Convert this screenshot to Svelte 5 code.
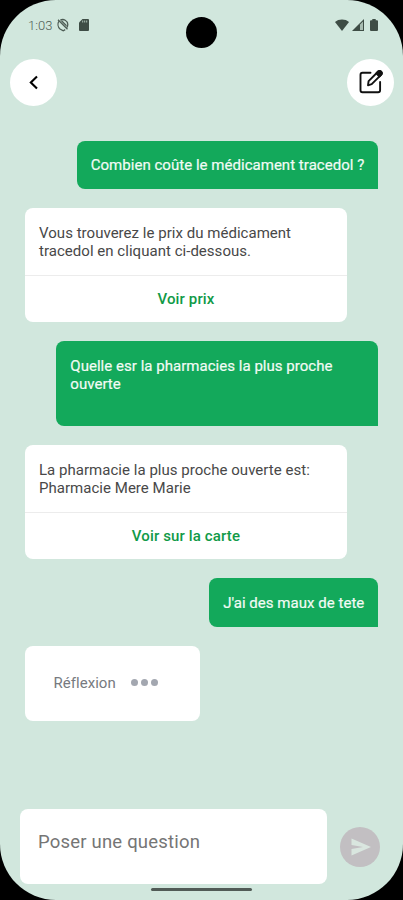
<script lang="ts">
    type Message = {
        from: 'user' | 'bot';
        lines: string[];
        action?: string;
        tall?: boolean;
    };

    const messages: Message[] = [
        { from: 'user', lines: ['Combien coûte le médicament tracedol ?'] },
        {
            from: 'bot',
            lines: ['Vous trouverez le prix du médicament', 'tracedol en cliquant ci-dessous.'],
            action: 'Voir prix'
        },
        { from: 'user', lines: ['Quelle esr la pharmacies la plus proche', 'ouverte'], tall: true },
        {
            from: 'bot',
            lines: ['La pharmacie la plus proche ouverte est:', 'Pharmacie Mere Marie'],
            action: 'Voir sur la carte'
        },
        { from: 'user', lines: ["J'ai des maux de tete"] }
    ];

    let question = $state('');
</script>

<div class="screen">
    <div class="status">
        <div class="status-left">
            <span class="time">1:03</span>
            <svg width="12" height="14" viewBox="0 0 12 14" fill="none" stroke="#4d5c54" stroke-width="1.3">
                <path d="M3.200 2.300A5 5 0 0 1 10.800 6.500c0 1.200-.4 2.300-1.200 3.200M1.800 3.200C.5 5.500.8 9 3 11l3.200 1.800 2-1.200" />
                <path d="M1 1.800l9.500 9.500M4.500 2.800l5 5" />
            </svg>
            <svg class="sd" width="10" height="12" viewBox="0 0 10 12">
                <path d="M3.500 0H9a1 1 0 0 1 1 1v10a1 1 0 0 1-1 1H1a1 1 0 0 1-1-1V3.500z" fill="#3e4d45" />
                <path d="M3.700 1.500v2M5.700 1.500v2M7.700 1.500v2" stroke="#b5cabf" stroke-width=".9" />
            </svg>
        </div>
        <div class="status-right">
            <svg width="14" height="12" viewBox="0 0 14 12">
                <path d="M7 12 0 3C3.600-.3 10.400-.3 14 3z" fill="#3e4d45" />
            </svg>
            <svg class="signal" width="12" height="12" viewBox="0 0 12 12">
                <path d="M0 12 12 0v12z" fill="#3e4d45" />
                <path d="M8 5.500l3-3V11H8z" fill="#a9bdb2" />
            </svg>
            <svg class="battery" width="8" height="12" viewBox="0 0 8 12">
                <path d="M2.300 0h3.400v1.200H7a1 1 0 0 1 1 1V11a1 1 0 0 1-1 1H1a1 1 0 0 1-1-1V2.200a1 1 0 0 1 1-1h1.300z" fill="#3e4d45" />
            </svg>
        </div>
        <div class="camera"></div>
    </div>

    <header>
        <button class="round" aria-label="Retour">
            <svg width="47" height="47" viewBox="0 0 47 47" fill="none" stroke="#000" stroke-width="2.100">
                <path d="M27 17.500l-6.200 6 6.200 6" />
            </svg>
        </button>
        <button class="round" aria-label="Nouvelle discussion">
            <svg width="47" height="47" viewBox="0 0 47 47" fill="none" stroke="#111" stroke-width="1.900" stroke-linecap="round" stroke-linejoin="round">
                <path d="M23.500 13.700h-8a2 2 0 0 0-2 2v15.600a2 2 0 0 0 2 2h15.600a2 2 0 0 0 2-2v-8.300" />
                <path d="M21 26.300l.6-4.200 9.600-9.600a1.800 1.800 0 0 1 2.600 0l.5.5a1.800 1.800 0 0 1 0 2.600l-9.600 9.600z" />
                <path d="M29.300 14.400l3.100 3.100 1.900-1.900a1.800 1.800 0 0 0 0-2.600l-.5-.5a1.800 1.800 0 0 0-2.600 0z" fill="#111" />
            </svg>
        </button>
    </header>

    <main>
        {#each messages as message}
            <div class="message {message.from}" class:tall={message.tall}>
                <p>
                    {#each message.lines as line}
                        <span>{line}</span>
                    {/each}
                </p>
                {#if message.action}
                    <button class="action">{message.action}</button>
                {/if}
            </div>
        {/each}

        <div class="message thinking">
            <span>Réflexion</span>
            <div class="dots"><i></i><i></i><i></i></div>
        </div>
    </main>

    <footer>
        <input placeholder="Poser une question" bind:value={question} />
        <button class="send" aria-label="Envoyer">
            <svg width="40" height="40" viewBox="0 0 40 40">
                <path d="M11.500 11.500 31 20l-19.500 8.500V22L23 20l-11.500-2z" fill="#d9e6df" />
            </svg>
        </button>
    </footer>
    <div class="home"></div>
</div>

<style>
    :global(body) {
        background: #000;
    }

    .screen {
        display: flex;
        flex-direction: column;
        box-sizing: border-box;
        height: 900px;
        border-radius: 56px;
        background: #d1e7dd;
        font-family: Roboto, sans-serif;
        overflow: hidden;
    }

    button {
        padding: 0;
        border: 0;
        font-family: inherit;
    }

    svg {
        display: block;
    }

    .status {
        position: relative;
        display: flex;
        justify-content: space-between;
        height: 51px;
        padding: 0 25px 0 28px;
        flex: none;
    }

    .status-left,
    .status-right {
        display: flex;
        align-items: center;
        height: 50px;
    }

    .time {
        width: 29px;
        font-size: 13px;
        font-weight: 300;
        color: #4d5c54;
    }

    .sd {
        margin-left: 10px;
    }

    .signal {
        margin-left: 3px;
    }

    .battery {
        margin-left: 6px;
    }

    .camera {
        position: absolute;
        top: 17px;
        left: 186px;
        width: 31px;
        height: 31px;
        border-radius: 50%;
        background: #000;
    }

    header {
        display: flex;
        justify-content: space-between;
        height: 89.700px;
        padding: 8px 9px 0 10px;
        box-sizing: border-box;
        flex: none;
    }

    .round {
        width: 47px;
        height: 47px;
        border-radius: 50%;
        background: #fff;
    }

    main {
        display: flex;
        flex-direction: column;
        align-items: flex-start;
        gap: 19.200px;
        flex: 1;
        padding: 0 24.700px 0 25px;
    }

    .message {
        border-radius: 8px;
        background: #fff;
        font-size: 15px;
        line-height: 18px;
        letter-spacing: 0.030px;
        white-space: nowrap;
    }

    p {
        margin: 0;
    }

    p span {
        display: block;
    }

    .user {
        align-self: flex-end;
        box-sizing: border-box;
        height: 48.300px;
        padding: 15.500px 14px 0;
        border-radius: 8px 8px 0 8px;
        background: #13a95b;
        color: #f2fbf5;
        -webkit-text-stroke: 0.2px #f2fbf5;
    }

    .tall {
        width: 322px;
        height: 84.500px;
    }

    .bot {
        width: 322px;
        height: 114px;
        color: #484848;
    }

    .bot p {
        box-sizing: border-box;
        height: 66.700px;
        padding: 16px 14px 0;
    }

    .action {
        width: 100%;
        height: 47.300px;
        border-top: 1px solid #ececec;
        border-radius: 0 0 8px 8px;
        background: none;
        color: #109a47;
        font-size: 15px;
        font-weight: 500;
        letter-spacing: 0.130px;
    }

    .thinking {
        display: flex;
        align-items: center;
        box-sizing: border-box;
        width: 175px;
        height: 75.500px;
        padding-left: 28.500px;
        color: #777a80;
    }

    .dots {
        display: flex;
        gap: 3px;
        margin: -1px 0 0 15px;
    }

    .dots i {
        width: 7px;
        height: 7px;
        border-radius: 50%;
        background: #a3a7b0;
    }

    footer {
        display: flex;
        align-items: center;
        gap: 13px;
        padding-left: 19.500px;
        flex: none;
    }

    input {
        box-sizing: border-box;
        width: 307.500px;
        height: 75px;
        padding: 0 18.500px 9px;
        border: 0;
        border-radius: 8px;
        background: #fff;
        font-family: inherit;
        font-size: 18.500px;
        letter-spacing: 0.200px;
        outline: none;
    }

    input::placeholder {
        color: #757575;
        opacity: 1;
    }

    .send {
        width: 40px;
        height: 40px;
        border-radius: 50%;
        background: #c2bfc2;
    }

    .home {
        flex: none;
        width: 101px;
        height: 3px;
        margin: 4px 0 9px 151px;
        border-radius: 2px;
        background: #515b56;
    }
</style>
